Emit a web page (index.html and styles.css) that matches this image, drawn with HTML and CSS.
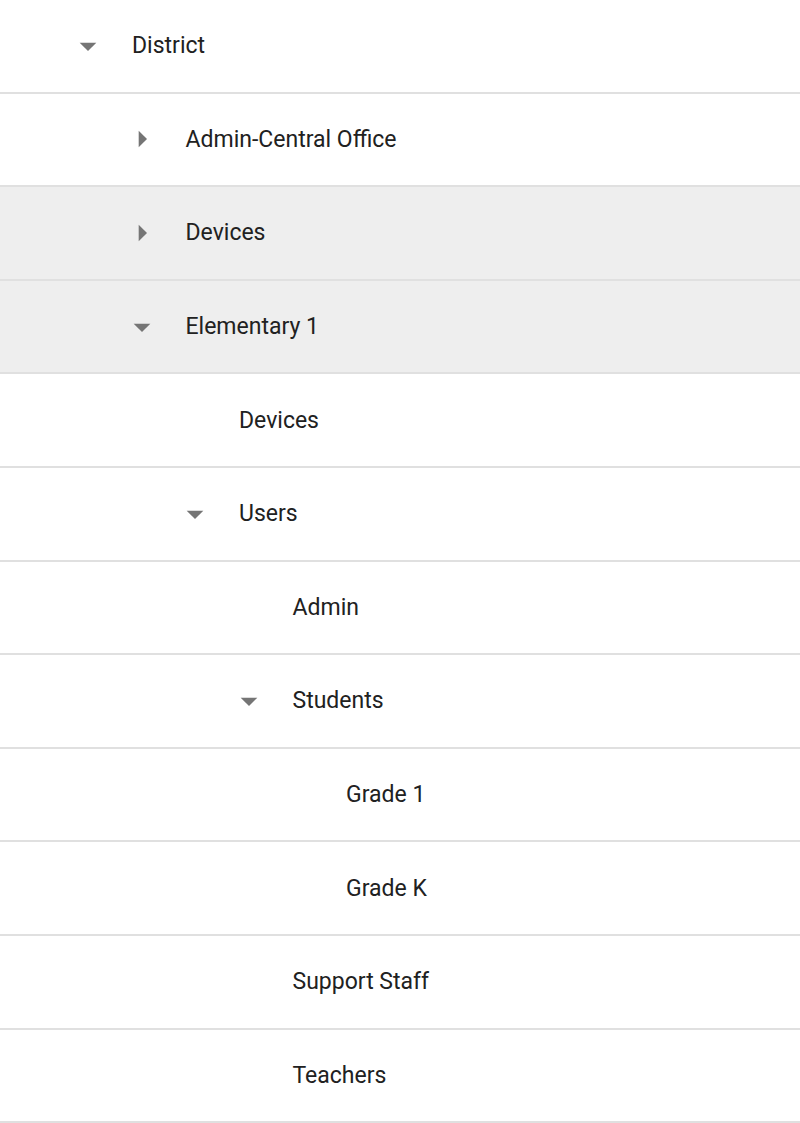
FILE: index.html
```html
<!DOCTYPE html>
<html lang="en">
<head>
<meta charset="utf-8">
<title>Tree</title>
<link rel="stylesheet" href="styles.css">
</head>
<body>
<ul class="tree">
  <li class="row lvl-0"><span class="icon"><svg viewBox="0 0 24 24"><path d="M7 10l5 5 5-5z"/></svg></span><span class="label">District</span></li>
  <li class="row lvl-1"><span class="icon"><svg viewBox="0 0 24 24"><path d="M10 17l5-5-5-5z"/></svg></span><span class="label">Admin-Central Office</span></li>
  <li class="row lvl-1 selected"><span class="icon"><svg viewBox="0 0 24 24"><path d="M10 17l5-5-5-5z"/></svg></span><span class="label">Devices</span></li>
  <li class="row lvl-1 selected"><span class="icon"><svg viewBox="0 0 24 24"><path d="M7 10l5 5 5-5z"/></svg></span><span class="label">Elementary 1</span></li>
  <li class="row lvl-2"><span class="icon"></span><span class="label">Devices</span></li>
  <li class="row lvl-2"><span class="icon"><svg viewBox="0 0 24 24"><path d="M7 10l5 5 5-5z"/></svg></span><span class="label">Users</span></li>
  <li class="row lvl-3"><span class="icon"></span><span class="label">Admin</span></li>
  <li class="row lvl-3"><span class="icon"><svg viewBox="0 0 24 24"><path d="M7 10l5 5 5-5z"/></svg></span><span class="label">Students</span></li>
  <li class="row lvl-4"><span class="icon"></span><span class="label">Grade 1</span></li>
  <li class="row lvl-4"><span class="icon"></span><span class="label">Grade K</span></li>
  <li class="row lvl-3"><span class="icon"></span><span class="label">Support Staff</span></li>
  <li class="row lvl-3"><span class="icon"></span><span class="label">Teachers</span></li>
</ul>
</body>
</html>
```
FILE: styles.css
```css
html, body {
  margin: 0;
  padding: 0;
  background: #ffffff;
}

body {
  font-family: Roboto, "Liberation Sans", Arial, sans-serif;
  color: #212121;
}

.tree {
  list-style: none;
  margin: 0;
  padding: 0;
}

.row {
  box-sizing: border-box;
  height: 93.6px;
  border-bottom: 2px solid #e0e0e0;
  display: flex;
  align-items: center;
  padding-left: 68px;
  background: #ffffff;
}

.row.selected {
  background: #eeeeee;
}

.lvl-1 { padding-left: 121.5px; }
.lvl-2 { padding-left: 175px; }
.lvl-3 { padding-left: 228.5px; }
.lvl-4 { padding-left: 282px; }

.icon {
  flex: 0 0 40px;
  width: 40px;
  height: 40px;
  margin-right: 24px;
  display: flex;
  align-items: center;
  justify-content: center;
}

.icon svg {
  width: 40px;
  height: 40px;
  fill: #757575;
}

.label {
  font-size: 23px;
  line-height: 1;
  color: #212121;
}
```
